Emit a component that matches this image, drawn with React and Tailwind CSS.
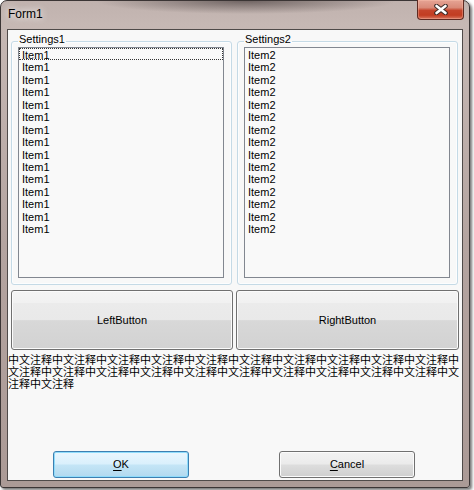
import React from "react";

const items1 = Array.from({ length: 15 }, () => "Item1");
const items2 = Array.from({ length: 15 }, () => "Item2");

function ListBox({ items, focus }) {
  return (
    <div className="w-[206px] h-[231px] border border-[#828790] bg-[#f9f9f9] overflow-hidden">
      {items.map((t, i) => (
        <div
          key={i}
          className={
            "h-[12.45px] border pt-[2px] pl-[2px] leading-[8.45px] text-[11px] text-black whitespace-nowrap " +
            (focus && i === 0 ? "border-dotted border-[#333]" : "border-transparent")
          }
        >
          {t}
        </div>
      ))}
    </div>
  );
}

function Group({ label, items, focus }) {
  return (
    <fieldset className="w-[221px] border border-[#c5dae6] rounded-[3px] pl-[6px] pr-[7px] pb-[6px] shadow-[inset_0_0_0_1px_#fcfdfe]">
      <legend className="px-[1px] leading-[11px] text-[11px] text-black">
        <span className="relative -top-[2px]">{label}</span>
      </legend>
      <ListBox items={items} focus={focus} />
    </fieldset>
  );
}

function BigButton({ label, w }) {
  return (
    <div
      className={
        w +
        " h-[60px] rounded-[3px] border border-[#707070] flex items-center justify-center text-[11px] text-black shadow-[inset_0_0_0_1px_#fbfbfb] bg-[linear-gradient(to_bottom,#f4f4f4_0%,#f1f1f1_20%,#ebebeb_21%,#e9e9e9_50%,#d8d8d8_51%,#d2d2d2_100%)]"
      }
    >
      {label}
    </div>
  );
}

export default function App() {
  return (
    <div
      className="w-[474px] h-[490px] bg-white overflow-hidden"
      style={{ fontFamily: '"Liberation Sans", Arial, sans-serif' }}
    >
      <div className="w-[470px] h-[488px] rounded-t-[7px] rounded-b-[3px] border border-[#3b3535] flex flex-col shadow-[2px_2px_3px_rgba(0,0,0,0.55)] bg-[radial-gradient(ellipse_150px_13px_at_245px_0px,rgba(60,50,50,0.6),transparent),linear-gradient(to_bottom,#c0b2ae,#c6b8b4_24px,#b4a4a0_50%,#ab9a96_100%)]">
        {/* Title bar */}
        <div className="h-[28px] flex items-start justify-between">
          <span className="ml-[7px] mt-[6px] text-[12px] leading-[14px] text-black [text-shadow:0_0_6px_rgba(255,255,255,0.9),0_0_10px_rgba(255,255,255,0.7)]">
            Form1
          </span>
          <div className="-mt-[1px] mr-[5px] w-[47px] h-[20px] rounded-b-[4px] border border-t-0 border-[#5e2a22] flex items-center justify-center shadow-[inset_0_0_0_1px_rgba(255,200,180,0.35)] bg-[linear-gradient(to_bottom,#e6a495_0%,#d98a78_40%,#c5442b_55%,#c23d22_80%,#d9765f_100%)]">
            <svg width="14" height="11" viewBox="0 0 14 11">
              <path d="M2.5 2 L11.5 9 M11.5 2 L2.5 9" stroke="#3b2a26" strokeWidth="4.6" strokeLinecap="round" />
              <path d="M2.5 2 L11.5 9 M11.5 2 L2.5 9" stroke="#ffffff" strokeWidth="2.6" strokeLinecap="round" />
            </svg>
          </div>
        </div>

        {/* Client area */}
        <div className="ml-[6px] w-[456px] h-[452px] border border-[#4f4a49] bg-[#f8f8f8] flex flex-col">
          <div className="mt-[6px] pl-[3px] flex gap-[5px]">
            <Group label="Settings1" items={items1} focus />
            <Group label="Settings2" items={items2} />
          </div>

          <div className="mt-[5px] pl-[3px] flex gap-[3px]">
            <BigButton label="LeftButton" w="w-[222px]" />
            <BigButton label="RightButton" w="w-[223px]" />
          </div>

          <p
            className="mt-[3px] w-[454px] text-[11px] leading-[12px] text-black break-all"
            style={{ fontFamily: '"Noto Sans CJK SC", sans-serif' }}
          >
            {"中文注释".repeat(22)}
          </p>

          <div className="mt-auto mb-[2px] pl-[45px] flex gap-[90px]">
            <div className="w-[136px] h-[27px] rounded-[3px] border border-[#3c7fb1] flex items-center justify-center text-[11px] text-black shadow-[inset_0_0_0_1px_#8fdcfb] bg-[linear-gradient(to_bottom,#eaf6fd_0%,#d9f0fc_48%,#c4e5f6_52%,#b2d9ef_100%)]">
              <span>
                <span className="underline underline-offset-[2px]">O</span>K
              </span>
            </div>
            <div className="w-[136px] h-[27px] rounded-[3px] border border-[#707070] flex items-center justify-center text-[11px] text-black shadow-[inset_0_0_0_1px_#fbfbfb] bg-[linear-gradient(to_bottom,#f2f2f2_0%,#ebebeb_48%,#dddddd_52%,#cfcfcf_100%)]">
              <span>
                <span className="underline underline-offset-[2px]">C</span>ancel
              </span>
            </div>
          </div>
        </div>
      </div>
    </div>
  );
}
